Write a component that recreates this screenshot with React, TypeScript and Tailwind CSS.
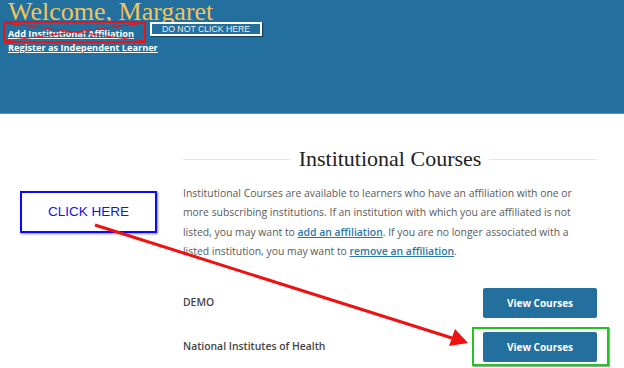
import React from "react";

const sans = { fontFamily: '"Open Sans", "Noto Sans", sans-serif' };

export default function App() {
  return (
    <div className="relative w-[624px] h-[368px] overflow-hidden bg-white" style={sans}>
      {/* Header */}
      <header className="h-[115px] bg-[#236f9e] border-b border-[#5b93bb] px-[8px]">
        <h1 className="text-[26px] leading-none text-[#f2c45c] mt-[-1px] font-['Liberation_Serif',serif]">
          Welcome, Margaret
        </h1>
        <div className="flex items-start mt-[2px]">
          <div className="flex flex-col text-[9.2px] font-bold leading-[14px] text-white">
            <a className="underline">Add Institutional Affiliation</a>
            <a className="underline">Register as Independent Learner</a>
          </div>
        </div>
      </header>

      {/* Main content */}
      <main className="pl-[183px] pr-[27px] pt-[32px]">
        <div className="flex items-center gap-[8px]">
          <div className="flex-1 h-px bg-[#e6e6e6]" />
          <h2 className="text-[22px] leading-[26px] text-[#222] font-['Liberation_Serif',serif]">
            Institutional Courses
          </h2>
          <div className="flex-1 h-px bg-[#e6e6e6]" />
        </div>
        <p className="mt-[12px] text-[10.4px] leading-[19.3px] text-[#5a5a5a]">
          Institutional Courses are available to learners who have an affiliation with one or
          <br />
          more subscribing institutions. If an institution with which you are affiliated is not
          <br />
          listed, you may want to{" "}
          <a className="text-[#2a77a8] underline font-semibold">add an affiliation</a>. If you are no longer associated with a
          <br />
          listed institution, you may want to{" "}
          <a className="text-[#2a77a8] underline font-semibold">remove an affiliation</a>.
        </p>
        <div className="mt-[27px] flex flex-col gap-[14px]">
          <div className="flex items-center justify-between">
            <span className="text-[10.4px] font-semibold text-[#444]">DEMO</span>
            <button className="w-[114px] h-[30px] rounded-[2px] bg-[#236f9e] text-white text-[10px] font-bold">
              View Courses
            </button>
          </div>
          <div className="flex items-center justify-between">
            <span className="text-[10.4px] font-semibold text-[#444]">National Institutes of Health</span>
            <button className="w-[114px] h-[30px] rounded-[2px] bg-[#236f9e] text-white text-[10px] font-bold">
              View Courses
            </button>
          </div>
        </div>
      </main>

      {/* Annotations */}
      <div className="absolute left-[3px] top-[21px] w-[143px] h-[22px] border-[2.5px] border-[#e8141c]" />
      <svg className="absolute left-0 top-0 pointer-events-none" width="624" height="368">
        <line x1="5" y1="23" x2="144" y2="41" stroke="#e8141c" strokeWidth="1" />
        <line x1="5" y1="41" x2="144" y2="23" stroke="#e8141c" strokeWidth="1" />
      </svg>

      <div className="absolute left-[150px] top-[22px] w-[112px] h-[14px] border-2 border-white bg-[#236f9e] shadow-[1px_1px_1px_rgba(0,0,0,0.4)] flex items-center justify-center">
        <span className="text-[8.7px] leading-none text-[#e8eef3] font-['Liberation_Sans',sans-serif]">
          DO NOT CLICK HERE
        </span>
      </div>

      <div className="absolute left-[20px] top-[191px] w-[137px] h-[42px] border-2 border-[#0a0af5] bg-white shadow-[1px_1px_2px_rgba(0,0,0,0.45)] flex items-center justify-center">
        <span className="text-[13.5px] leading-none text-[#1414e6] font-['Liberation_Sans',sans-serif]">
          CLICK HERE
        </span>
      </div>

      <div className="absolute left-[472px] top-[327px] w-[137px] h-[39px] border-2 border-[#22c322] shadow-[1px_1px_1px_rgba(0,0,0,0.35)]" />

      <svg className="absolute left-0 top-0 pointer-events-none" width="624" height="368">
        <line x1="95" y1="225" x2="452" y2="338" stroke="#ee1111" strokeWidth="3" />
        <polygon points="468,343 449,346 455,329" fill="#ee1111" />
      </svg>
    </div>
  );
}
